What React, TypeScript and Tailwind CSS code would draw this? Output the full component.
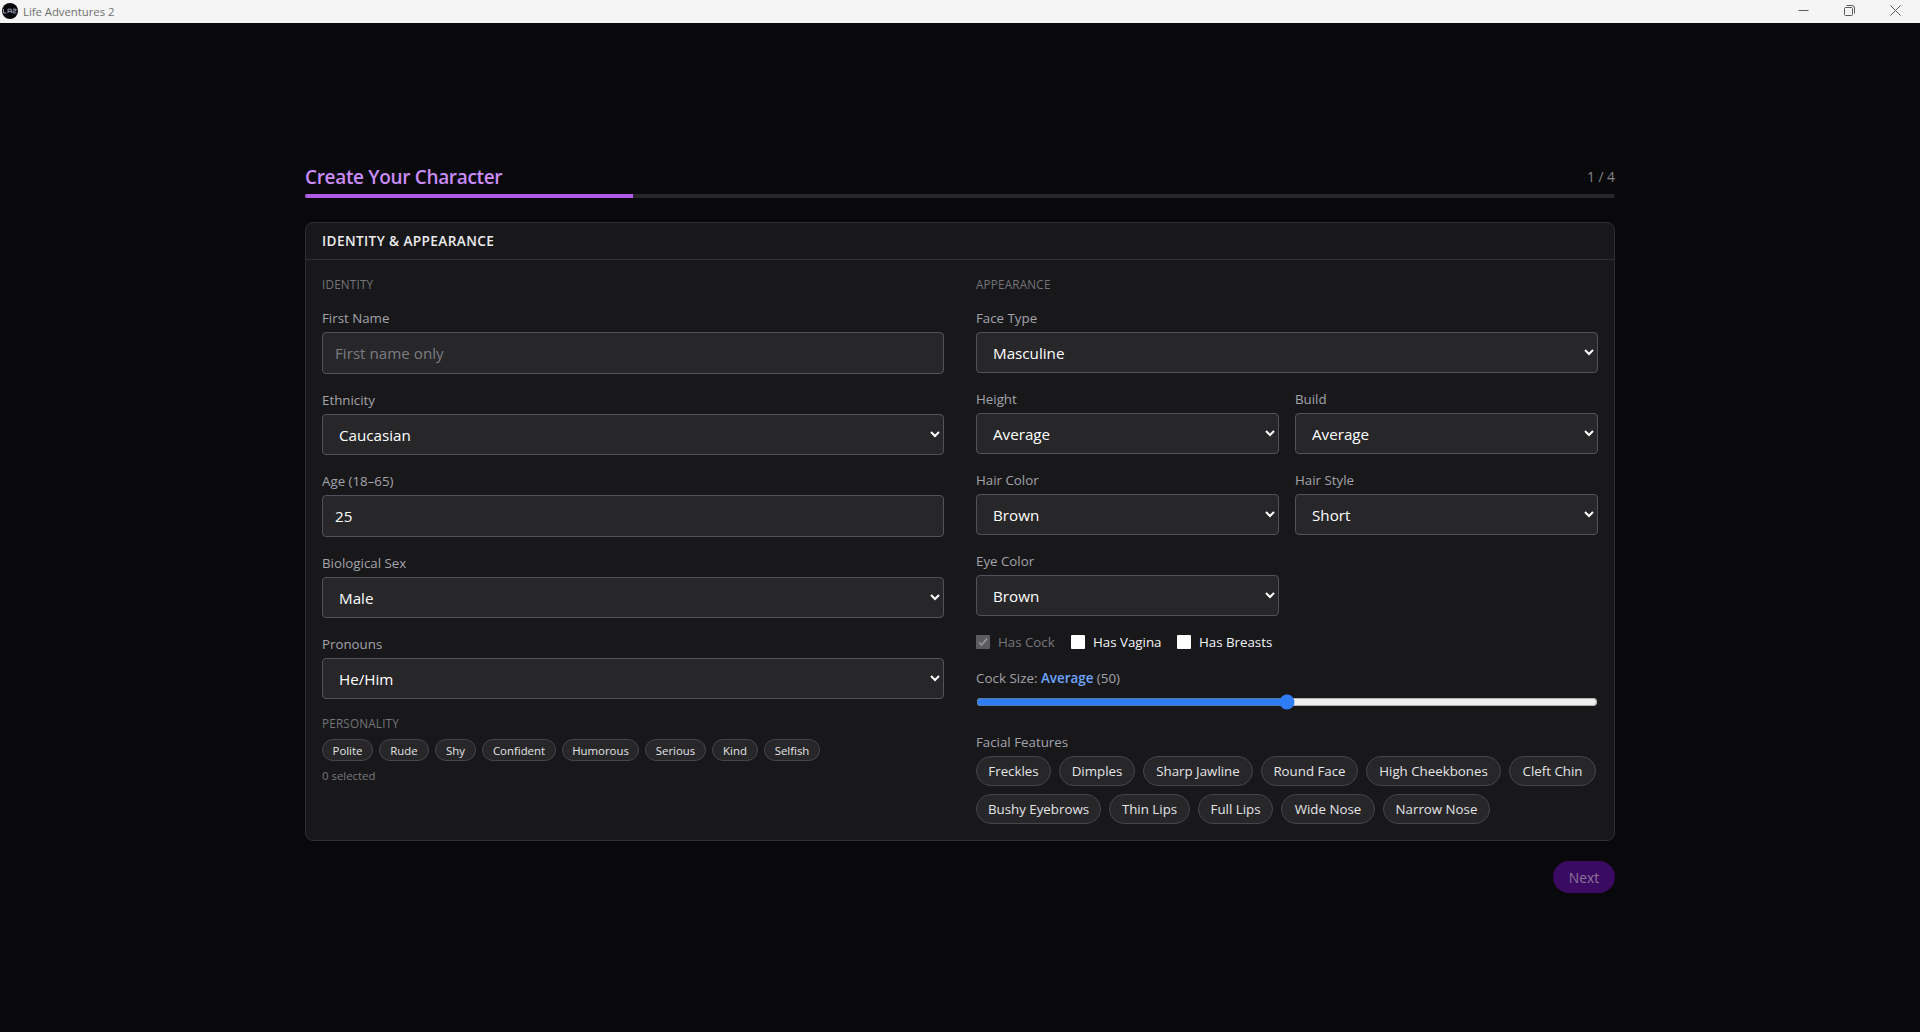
import React, { useState } from 'react';

const PERSONALITY_TRAITS = [
  { label: 'Polite', width: 'w-[51px]' },
  { label: 'Rude', width: 'w-[50px]' },
  { label: 'Shy', width: 'w-[41px]' },
  { label: 'Confident', width: 'w-[74px]' },
  { label: 'Humorous', width: 'w-[77px]' },
  { label: 'Serious', width: 'w-[61px]' },
  { label: 'Kind', width: 'w-[46px]' },
  { label: 'Selfish', width: 'w-[56px]' },
];

const FACIAL_FEATURES = [
  { label: 'Freckles', width: 'w-[75px]' },
  { label: 'Dimples', width: 'w-[76px]' },
  { label: 'Sharp Jawline', width: 'w-[110px]' },
  { label: 'Round Face', width: 'w-[97px]' },
  { label: 'High Cheekbones', width: 'w-[135px]' },
  { label: 'Cleft Chin', width: 'w-[87px]' },
  { label: 'Bushy Eyebrows', width: 'w-[125px]' },
  { label: 'Thin Lips', width: 'w-[81px]' },
  { label: 'Full Lips', width: 'w-[75px]' },
  { label: 'Wide Nose', width: 'w-[94px]' },
  { label: 'Narrow Nose', width: 'w-[107px]' },
];

interface FieldProps {
  label: string;
  children: React.ReactNode;
}

function Field({ label, children }: FieldProps) {
  return (
    <label className="flex flex-col gap-1">
      <span className="text-[13.3px] leading-5 text-[#a3a3aa]">{label}</span>
      {children}
    </label>
  );
}

function Select({ label, options }: { label: string; options: string[] }) {
  return (
    <Field label={label}>
      <select className="h-[41px] w-full rounded border border-[#52525a] bg-[#27272a] px-3 text-[15.2px] text-white">
        {options.map((option) => (
          <option key={option}>{option}</option>
        ))}
      </select>
    </Field>
  );
}

function GroupTitle({ children }: { children: React.ReactNode }) {
  return (
    <h3 className="pt-px text-[11.7px] leading-[15px] tracking-[0.2px] text-[#74747a]">{children}</h3>
  );
}

interface CheckProps {
  label: string;
  checked?: boolean;
  disabled?: boolean;
  width: string;
}

function Check({ label, checked = false, disabled = false, width }: CheckProps) {
  return (
    <label className={`flex items-center gap-2 whitespace-nowrap ${width} ${disabled ? 'text-[#77777b]' : 'text-[#f4f4f5]'}`}>
      <span className={`flex size-3.5 shrink-0 items-center justify-center rounded-[1px] ${disabled ? 'bg-[#5c5c5e]' : 'bg-white'}`}>
        {checked && (
          <svg viewBox="0 0 14 14" className="size-3.5" fill="none" stroke="#929294" strokeWidth="1.8">
            <path d="M3 7.4 5.6 10 11 3.6" />
          </svg>
        )}
      </span>
      <span className="text-[13.3px] leading-5">{label}</span>
    </label>
  );
}

function TitleBar() {
  return (
    <div className="flex h-[23px] items-center justify-between bg-[#f5f5f5] pl-0.5 pr-[19px]">
      <div className="flex items-center gap-[5px] pb-px">
        <svg viewBox="0 0 16 16" className="size-4" fill="none">
          <circle cx="8" cy="8" r="8" fill="#07070c" />
          <path d="M1.5 6v4h3M6 10V6.2h3.3V10M6 8.4h3.3M11 6.2h3v1.7h-3v2h3.4" stroke="#a9a9c4" strokeWidth="0.9" />
        </svg>
        <span className="pt-px text-[11.4px] leading-4 tracking-[-0.05px] text-[#707070]">Life Adventures 2</span>
      </div>
      <div className="flex items-center gap-[35px] pb-[3px] text-[#5c5c5c]">
        <svg viewBox="0 0 11 11" className="size-[11px]" fill="none" stroke="currentColor">
          <path d="M0.5 5.5h10" />
        </svg>
        <svg viewBox="0 0 11 11" className="size-[11px]" fill="none" stroke="currentColor">
          <rect x="0.5" y="2.5" width="8" height="8" rx="1" />
          <path d="M2.5 0.5h5.5a2.5 2.5 0 0 1 2.5 2.5v5.5" />
        </svg>
        <svg viewBox="0 0 11 11" className="size-[11px]" fill="none" stroke="currentColor">
          <path d="m0.5 0.5 10 10M10.5 0.5l-10 10" />
        </svg>
      </div>
    </div>
  );
}

export default function App() {
  const [size, setSize] = useState(50);

  return (
    <div className="flex h-[1032px] flex-col overflow-hidden bg-[#09090b] font-['Open_Sans','Noto_Sans',sans-serif]">
      <TitleBar />

      <main className="mx-auto w-[1310px] pt-[140px]">
        {/* Step header */}
        <div className="flex h-7 items-center justify-between">
          <h1 className="text-[19px] font-semibold tracking-[-0.33px] text-[#c98cf8]">Create Your Character</h1>
          <span className="text-[13.8px] text-[#85858b]">1 / 4</span>
        </div>
        <div className="mt-[3px] h-1 overflow-hidden rounded-xs bg-[#27272a]">
          <div className="h-full w-1/4 bg-[#b05ae8]" />
        </div>

        {/* Form panel */}
        <section className="mt-6 rounded-lg border border-[#303034] bg-[#18181b]">
          <h2 className="border-b border-[#303034] px-4 py-2 text-[13.6px] font-semibold leading-5 tracking-[0.4px] text-[#ececee]">
            IDENTITY &amp; APPEARANCE
          </h2>

          <div className="grid grid-cols-2 gap-8 p-4">
            <div className="flex flex-col gap-4">
              <GroupTitle>IDENTITY</GroupTitle>
              <Field label="First Name">
                <input
                  placeholder="First name only"
                  className="h-[42px] w-full rounded border border-[#52525a] bg-[#27272a] px-3 pb-px text-[15.2px] text-white placeholder:text-[#7c7c80]"
                />
              </Field>
              <Select label="Ethnicity" options={['Caucasian']} />
              <Field label="Age (18–65)">
                <input
                  defaultValue="25"
                  className="h-[42px] w-full rounded border border-[#52525a] bg-[#27272a] px-3 pb-px text-[15.2px] text-white"
                />
              </Field>
              <Select label="Biological Sex" options={['Male', 'Female']} />
              <Select label="Pronouns" options={['He/Him', 'She/Her', 'They/Them']} />

              <div>
                <GroupTitle>PERSONALITY</GroupTitle>
                <div className="mt-2 flex gap-1.5">
                  {PERSONALITY_TRAITS.map(({ label, width }) => (
                    <button
                      key={label}
                      className={`flex h-[22px] items-center justify-center whitespace-nowrap rounded-full border border-[#45454b] bg-[#27272a] pt-px text-[11.4px] text-[#e4e4e7] ${width}`}
                    >
                      {label}
                    </button>
                  ))}
                </div>
                <p className="mt-[7px] text-[11.4px] leading-4 text-[#77777c]">0 selected</p>
              </div>
            </div>

            <div className="flex flex-col gap-4">
              <GroupTitle>APPEARANCE</GroupTitle>
              <Select label="Face Type" options={['Masculine', 'Feminine']} />
              <div className="grid grid-cols-2 gap-4">
                <Select label="Height" options={['Average']} />
                <Select label="Build" options={['Average']} />
                <Select label="Hair Color" options={['Brown']} />
                <Select label="Hair Style" options={['Short']} />
                <Select label="Eye Color" options={['Brown']} />
              </div>

              <div className="flex gap-4">
                <Check label="Has Cock" checked disabled width="w-[79px]" />
                <Check label="Has Vagina" width="w-[90px]" />
                <Check label="Has Breasts" width="w-[95px]" />
              </div>

              <div className="flex h-12 flex-col">
                <span className="text-[13.4px] leading-5 text-[#a3a3aa]">
                  Cock Size: <span className="font-semibold text-[#6ea5fb]">Average</span> ({size})
                </span>
                <input
                  type="range"
                  min={0}
                  max={100}
                  value={size}
                  onChange={(e) => setSize(Number(e.target.value))}
                  className="mt-1.5 h-4 w-full accent-[#2f7df6]"
                />
              </div>

              <div>
                <span className="block text-[13.3px] leading-5 text-[#a3a3aa]">Facial Features</span>
                <div className="mt-1 flex flex-wrap gap-2">
                  {FACIAL_FEATURES.map(({ label, width }) => (
                    <button
                      key={label}
                      className={`flex h-[30px] items-center justify-center whitespace-nowrap rounded-full border border-[#45454b] bg-[#27272a] pt-0.5 text-[13.3px] text-[#e4e4e7] ${width}`}
                    >
                      {label}
                    </button>
                  ))}
                </div>
              </div>
            </div>
          </div>
        </section>

        <div className="mt-5 flex justify-end">
          <button className="h-8 w-[62px] rounded-full bg-[#3b0a63] pt-0.5 text-[13.8px] text-[#8a7797]">Next</button>
        </div>
      </main>
    </div>
  );
}
